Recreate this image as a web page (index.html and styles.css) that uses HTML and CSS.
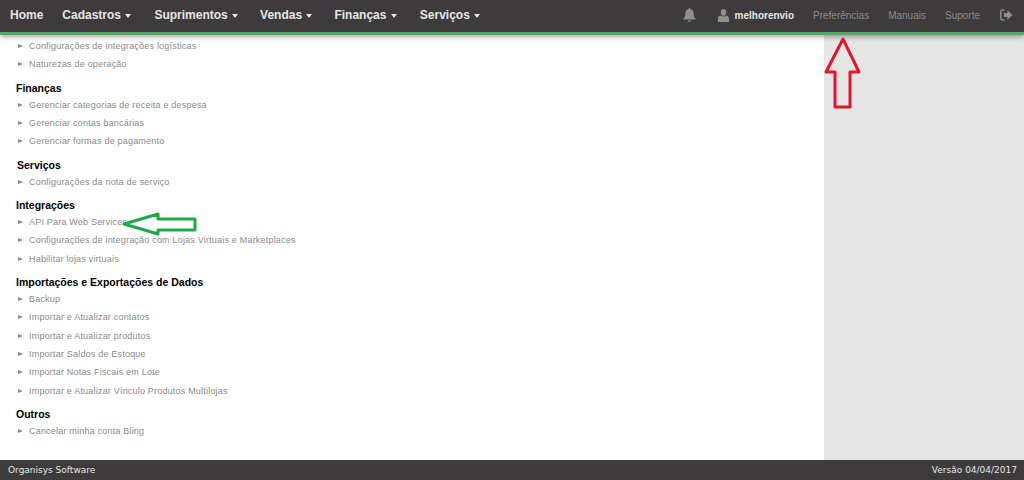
FILE: index.html
```html
<!DOCTYPE html>
<html lang="en">

<head>
    <meta charset="UTF-8">
    <meta name="viewport" content="width=device-width, initial-scale=1.0">
    <title>Preferências</title>

    <link rel="stylesheet" href="styles.css">
</head>

<body>
    <div class="navbar">
        <a class="menu menu-home">Home</a>
        <a class="menu menu-cadastros">Cadastros <i class="caret"></i></a>
        <a class="menu menu-suprimentos">Suprimentos <i class="caret"></i></a>
        <a class="menu menu-vendas">Vendas <i class="caret"></i></a>
        <a class="menu menu-financas">Finanças <i class="caret"></i></a>
        <a class="menu">Serviços <i class="caret"></i></a>

        <div class="navright">
            <svg class="icon bell" viewBox="0 0 14 15">
                <path d="M7 0a1 1 0 0 1 1 1.2c2.4.5 3.5 2.300 3.500 4.800 0 3 .8 4.300 2.100 5.500v.8H.4v-.8C1.700 10.300 2.500 9 2.500 6c0-2.500 1.100-4.300 3.500-4.800A1 1 0 0 1 7 0zM5.300 13.300h3.400a1.700 1.700 0 0 1-3.400 0z" />
            </svg>
            <svg class="icon user" viewBox="0 0 12 14">
                <path d="M6 0c1.900 0 3 1.400 3 3.400S7.900 7.200 6 7.200 3 5.400 3 3.400 4.100 0 6 0zM3 7c.8.800 1.800 1.200 3 1.200S8.200 7.800 9 7c1.900.3 3 1.400 3 3.500V14H0v-3.500C0 8.400 1.100 7.300 3 7z" />
            </svg>
            <span class="username">melhorenvio</span>
            <a class="link link-pref">Preferências</a>
            <a class="link link-manuais">Manuais</a>
            <a class="link link-suporte">Suporte</a>
            <svg class="icon signout" viewBox="0 0 13 12">
                <path d="M4.500 1H2.200C1.300 1 .8 1.500.8 2.400v7.200c0 .9.5 1.400 1.400 1.400h2.300" fill="none" stroke="#8f8f8f" stroke-width="1.500" />
                <path d="M7.500 1.200 12.500 6l-5 4.800V8H4V4h3.500z" />
            </svg>
        </div>
    </div>

    <div class="main">
        <div class="content">
            <ul class="list">
                <li>Configurações de integrações logísticas</li>
                <li>Naturezas de operação</li>
            </ul>

            <h4>Finanças</h4>
            <ul class="list">
                <li>Gerenciar categorias de receita e despesa</li>
                <li>Gerenciar contas bancárias</li>
                <li>Gerenciar formas de pagamento</li>
            </ul>

            <h4 class="title-servicos">Serviços</h4>
            <ul class="list">
                <li>Configurações da nota de serviço</li>
            </ul>

            <h4>Integrações</h4>
            <ul class="list">
                <li>API Para Web Services</li>
                <li>Configurações de integração com Lojas Virtuais e Marketplaces</li>
                <li>Habilitar lojas virtuais</li>
            </ul>

            <h4>Importações e Exportações de Dados</h4>
            <ul class="list">
                <li>Backup</li>
                <li>Importar e Atualizar contatos</li>
                <li>Importar e Atualizar produtos</li>
                <li>Importar Saldos de Estoque</li>
                <li>Importar Notas Fiscais em Lote</li>
                <li>Importar e Atualizar Vínculo Produtos Multilojas</li>
            </ul>

            <h4>Outros</h4>
            <ul class="list">
                <li>Cancelar minha conta Bling</li>
            </ul>
        </div>
        <div class="side"></div>
    </div>

    <div class="footer">
        <span>Organisys Software</span>
        <span>Versão 04/04/2017</span>
    </div>

    <!-- setas desenhadas por cima da tela -->
    <svg class="arrow arrow-red" viewBox="0 0 38 74">
        <path d="M19 3 35 36H26V71H11V36H2z" />
    </svg>
    <svg class="arrow arrow-green" viewBox="0 0 78 26">
        <path d="M3 13 37 3V8H74V19H37V23z" />
    </svg>
</body>

</html>
```

FILE: styles.css
```css
* {
    box-sizing: border-box;
}

body {
    margin: 0;
    height: 480px;
    overflow: hidden;
    position: relative;
    display: flex;
    flex-direction: column;
    background-color: #ffffff;
    font-family: "Liberation Sans", Arial, sans-serif;
}

.navbar {
    height: 35px;
    flex: none;
    display: flex;
    align-items: center;
    padding: 0 0 2px 10px;
    position: relative;
    background-color: #3d3b3b;
    border-bottom: 3px solid #53a868;
    box-shadow: 0 2px 5px rgba(0, 0, 0, 0.35);
}

.menu {
    color: #e6e6e6;
    font-size: 12px;
    font-weight: bold;
    margin-right: 24px;
    white-space: nowrap;
}

.menu-home {
    margin-right: 19px;
}

.menu-cadastros {
    margin-right: 23px;
}

.menu-suprimentos {
    margin-right: 22px;
}

.menu-vendas {
    margin-right: 22px;
}

.menu-financas {
    margin-right: 23px;
}

.caret {
    display: inline-block;
    margin-left: 1px;
    vertical-align: middle;
    border-top: 4px solid #e6e6e6;
    border-left: 3.500px solid transparent;
    border-right: 3.500px solid transparent;
}

.navright {
    margin-left: auto;
    display: flex;
    align-items: center;
}

.icon {
    display: block;
    fill: #8f8f8f;
}

.bell {
    width: 13px;
    height: 14px;
    margin-right: 22px;
}

.user {
    width: 11px;
    height: 13px;
    margin-right: 6px;
}

.username {
    color: #e6e6e6;
    font-size: 10px;
    font-weight: bold;
    margin-right: 19px;
}

.link {
    color: #8b8b8b;
    font-size: 10px;
}

.link-pref {
    margin-right: 19px;
}

.link-manuais {
    margin-right: 19px;
}

.link-suporte {
    margin-right: 20px;
}

.signout {
    width: 13px;
    height: 12px;
    margin-right: 11px;
}

.main {
    flex: 1;
    display: flex;
    min-height: 0;
}

.content {
    width: 824px;
    padding: 2px 0 0 16px;
}

.side {
    flex: 1;
    background-color: #e5e5e5;
}

h4 {
    margin: 6px 0 0;
    color: #000000;
    font-size: 10.500px;
    font-weight: bold;
    line-height: 16px;
}

.title-servicos {
    padding-left: 1px;
}

.list {
    list-style: none;
    margin: 0;
    padding: 0;
}

.list li {
    display: flex;
    align-items: center;
    height: 18.330px;
    color: #8a8a8a;
    font-size: 9px;
    letter-spacing: 0.200px;
    white-space: nowrap;
}

.list li::before {
    content: "";
    flex: none;
    margin: 0 6px 0 2px;
    border-left: 5px solid #8a8a8a;
    border-top: 2.500px solid transparent;
    border-bottom: 2.500px solid transparent;
}

.footer {
    height: 20px;
    flex: none;
    display: flex;
    align-items: center;
    justify-content: space-between;
    padding: 0 7px 0 8px;
    background-color: #3d3b3b;
    color: #e6e6e6;
    font-family: "DejaVu Sans", Verdana, sans-serif;
    font-size: 9px;
}

.arrow {
    position: absolute;
    fill: none;
    stroke-width: 3;
    stroke-linejoin: round;
}

.arrow-red {
    left: 824px;
    top: 36px;
    width: 38px;
    height: 74px;
    stroke: #e0182d;
}

.arrow-green {
    left: 121px;
    top: 211px;
    width: 78px;
    height: 26px;
    stroke: #1fa84a;
}
```
